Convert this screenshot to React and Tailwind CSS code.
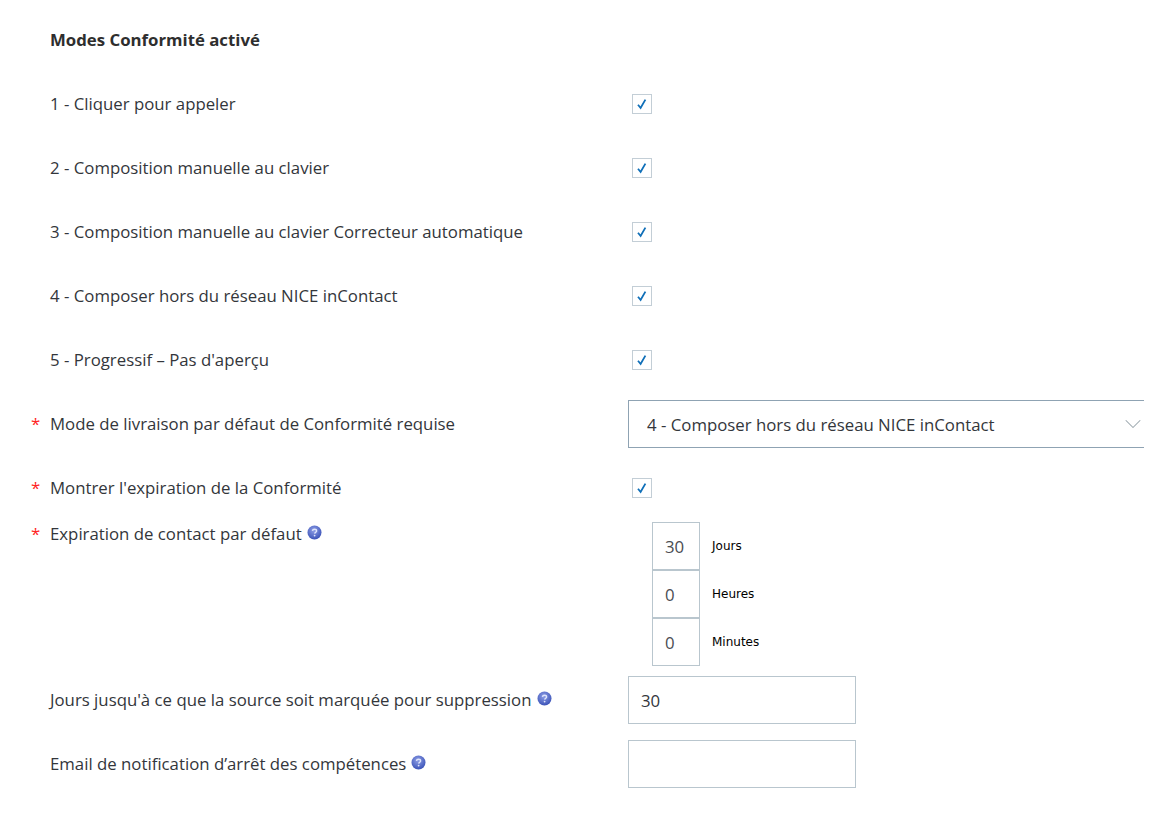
import React from 'react';
import { ChevronDown } from 'lucide-react';

const HelpIcon = () => (
    <svg width="15" height="15" viewBox="0 0 15 15" className="shrink-0 mt-[3px]">
        <defs>
            <radialGradient id="helpBlue" cx="45%" cy="35%" r="65%">
                <stop offset="0%" stopColor="#8f9fe6" />
                <stop offset="100%" stopColor="#3b53b8" />
            </radialGradient>
        </defs>
        <circle cx="7.5" cy="7.5" r="7" fill="url(#helpBlue)" />
        <path d="M5.4 5.8c.2-1.1 1.1-1.6 2.1-1.6 1.2 0 2.1.7 2.1 1.7 0 1.3-1.7 1.4-1.9 2.7" fill="none" stroke="#dfe5fb" strokeWidth="1.4" />
        <circle cx="7.6" cy="10.6" r=".9" fill="#dfe5fb" />
    </svg>
);

const Checkbox = () => (
    <div className="w-5 h-5 ml-1 border border-[#c3ced6] bg-white flex items-center justify-center">
        <svg width="14" height="14" viewBox="0 0 14 14">
            <path d="M3 7.8 L5.6 11 L10.4 2.6" fill="none" stroke="#0f6fb8" strokeWidth="1.8" />
        </svg>
    </div>
);

const Required = () => (
    <span className="absolute left-[-19px] top-0 text-[#ff1f1f]">*</span>
);

const CheckRow = ({ label }) => (
    <div className="h-16 flex items-center pl-[50px]">
        <div className="w-[578px]">{label}</div>
        <Checkbox />
    </div>
);

const DurationRow = ({ value, unit }) => (
    <div className="flex">
        <div className="w-12 h-12 border border-[#b9c6ce] pl-3 pt-[2px] flex items-center bg-white text-[#4a4d52]">{value}</div>
        <span className="ml-3 mt-4 text-[12px] leading-4 text-black font-['DejaVu_Sans',sans-serif]">{unit}</span>
    </div>
);

const modes = [
    "1 - Cliquer pour appeler",
    "2 - Composition manuelle au clavier",
    "3 - Composition manuelle au clavier Correcteur automatique",
    "4 - Composer hors du réseau NICE inContact",
    "5 - Progressif – Pas d'aperçu",
];

export default function App() {
    return (
        <div className="h-[815px] w-[1156px] overflow-hidden bg-white text-[16.8px] leading-6 text-[#33363b] font-['Open_Sans',sans-serif]">
            {/* Modes */}
            <div className="h-[72px] pt-7 pl-[50px] font-bold text-[#2e2e2e]">Modes Conformité activé</div>
            {modes.map((m) => (
                <CheckRow key={m} label={m} />
            ))}

            {/* Default mode */}
            <div className="flex pl-[50px] pt-2">
                <div className="relative w-[578px] pt-3">
                    <span className="absolute left-[-19px] top-3 text-[#ff1f1f]">*</span>
                    Mode de livraison par défaut de Conformité requise
                </div>
                <div className="w-[516px] h-12 border border-[#8fa3b3] border-r-0 pl-[18px] flex items-center justify-between">
                    <span className="pt-[2px]">4 - Composer hors du réseau NICE inContact</span>
                    <ChevronDown size={28} strokeWidth={0.9} className="text-[#9aa6ad] -mr-[3px]" />
                </div>
            </div>

            <div className="h-[64px] mt-[7px] flex items-center pl-[50px] pt-[1px]">
                <div className="relative w-[578px]">
                    <Required />
                    Montrer l'expiration de la Conformité
                </div>
                <Checkbox />
            </div>

            {/* Expiry */}
            <div className="flex pl-[50px] mt-[3px]">
                <div className="relative w-[602px] flex items-start gap-[5px]">
                    <Required />
                    <span>Expiration de contact par défaut</span>
                    <HelpIcon />
                </div>
                <div className="flex flex-col">
                    <DurationRow value="30" unit="Jours" />
                    <DurationRow value="0" unit="Heures" />
                    <DurationRow value="0" unit="Minutes" />
                </div>
            </div>

            <div className="flex pl-[50px] pt-[10px]">
                <div className="w-[578px] pt-3 flex items-start gap-[6px]">
                    <span>Jours jusqu'à ce que la source soit marquée pour suppression</span>
                    <HelpIcon />
                </div>
                <div className="w-[228px] h-12 border border-[#b9c6ce] pl-3 pt-[2px] flex items-center">30</div>
            </div>

            <div className="flex pl-[50px] pt-4">
                <div className="w-[578px] pt-3 flex items-start gap-[5px]">
                    <span>Email de notification d’arrêt des compétences</span>
                    <HelpIcon />
                </div>
                <div className="w-[228px] h-12 border border-[#b9c6ce]"></div>
            </div>
        </div>
    );
}
